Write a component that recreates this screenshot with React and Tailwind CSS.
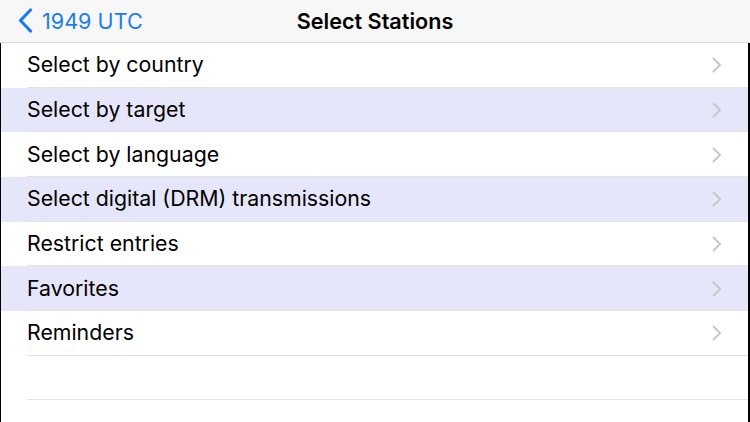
const rows = [
  { label: "Select by country", tint: false },
  { label: "Select by target", tint: true },
  { label: "Select by language", tint: false },
  { label: "Select digital (DRM) transmissions", tint: true },
  { label: "Restrict entries", tint: false },
  { label: "Favorites", tint: true },
  { label: "Reminders", tint: false },
];

function Chevron() {
  return (
    <svg width="10" height="16" viewBox="0 0 10 16" fill="none">
      <path d="M1.5 1.5 L8 8 L1.5 14.5" stroke="#c7c7cc" strokeWidth="2" strokeLinecap="round" strokeLinejoin="round" />
    </svg>
  );
}

export default function App() {
  return (
    <div className="w-[750px] h-[422px] overflow-hidden bg-white flex flex-col" style={{ fontFamily: "Inter, 'Liberation Sans', sans-serif" }}>
      <div className="h-[43px] shrink-0 bg-[#f7f7f7] border-b border-[#d9d9d9] relative flex items-center">
        <div className="flex items-center pl-[18px] gap-[9px] text-[#1a7cf5]">
          <svg width="15" height="25" viewBox="0 0 15 25" fill="none">
            <path d="M12.5 2 L2.5 12.5 L12.5 23" stroke="#1a7cf5" strokeWidth="3.2" strokeLinecap="round" strokeLinejoin="round" />
          </svg>
          <span className="text-[21.6px]">1949 UTC</span>
        </div>
        <div className="absolute inset-0 flex items-center justify-center font-semibold text-[21.6px] text-black">
          Select Stations
        </div>
      </div>
      <div className="flex-1 flex border-l border-l-black border-r-2 border-r-black">
        <div className="flex-1 flex flex-col">
          {rows.map((r) => (
            <div key={r.label} className={`h-[44.67px] flex ${r.tint ? "bg-[#e6e6fa]" : "bg-white"}`}>
              <div className="flex-1 ml-[26px] flex items-center justify-between pr-[26px] pt-px border-b border-[#e3e3e6]">
                <span className="text-[21.3px] text-black">{r.label}</span>
                <Chevron />
              </div>
            </div>
          ))}
          <div className="h-[44.67px] flex">
            <div className="flex-1 ml-[26px] border-b border-[#e3e3e6]" />
          </div>
        </div>
      </div>
    </div>
  );
}
